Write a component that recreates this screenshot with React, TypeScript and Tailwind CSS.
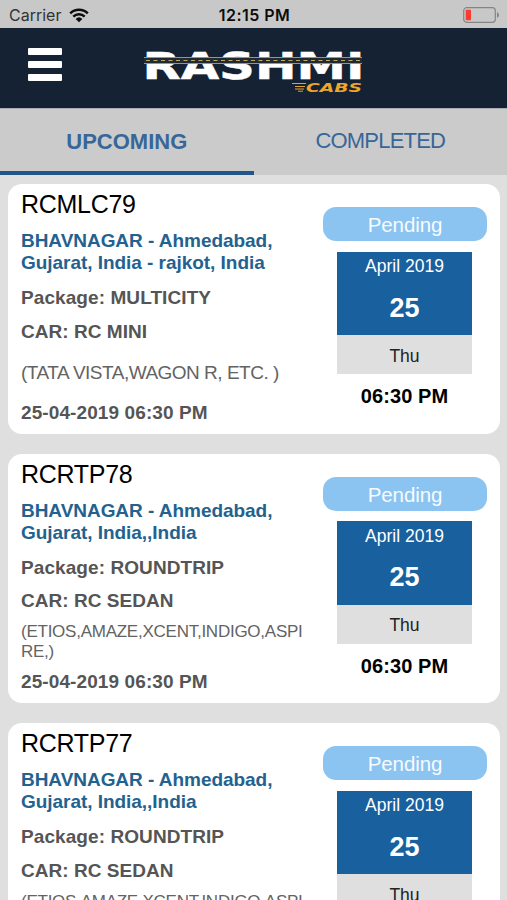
import { clsx } from 'clsx';

/* ─── Data ─────────────────────────────────────────────────── */

interface Booking {
  id: string;
  route: [string, string];
  tripType: string;
  car: string;
  models: string[];
  date: string;
  month: string;
  day: string;
  weekday: string;
  time: string;
  status: string;
}

const schedule = {
  date: '25-04-2019',
  month: 'April 2019',
  day: '25',
  weekday: 'Thu',
  time: '06:30 PM',
  status: 'Pending',
};

const bookings: Booking[] = [
  {
    id: 'RCMLC79',
    route: ['BHAVNAGAR - Ahmedabad,', 'Gujarat, India - rajkot, India'],
    tripType: 'MULTICITY',
    car: 'RC MINI',
    models: ['(TATA VISTA,WAGON R, ETC. )'],
    ...schedule,
  },
  {
    id: 'RCRTP78',
    route: ['BHAVNAGAR - Ahmedabad,', 'Gujarat, India,,India'],
    tripType: 'ROUNDTRIP',
    car: 'RC SEDAN',
    models: ['(ETIOS,AMAZE,XCENT,INDIGO,ASPI', 'RE,)'],
    ...schedule,
  },
  {
    id: 'RCRTP77',
    route: ['BHAVNAGAR - Ahmedabad,', 'Gujarat, India,,India'],
    tripType: 'ROUNDTRIP',
    car: 'RC SEDAN',
    models: ['(ETIOS,AMAZE,XCENT,INDIGO,ASPI', 'RE,)'],
    ...schedule,
  },
];

/* ─── Header ───────────────────────────────────────────────── */

function WifiIcon() {
  return (
    <svg width="20" height="15" viewBox="0 0 20 15" fill="none" stroke="#0c0c0c" strokeWidth="2.5">
      <path d="M1.2 5.3a12.6 12.6 0 0 1 17.6 0" />
      <path d="M4.3 8.6a8.2 8.2 0 0 1 11.4 0" />
      <path d="M10 14.2 6.7 10.9a4.8 4.8 0 0 1 6.6 0z" fill="#0c0c0c" stroke="none" />
    </svg>
  );
}

function BatteryIcon() {
  return (
    <svg width="37" height="16" viewBox="0 0 37 16">
      <rect x="0.7" y="0.7" width="31.6" height="14.6" rx="3" fill="none" stroke="#858585" strokeWidth="1.2" />
      <rect x="2.7" y="2.8" width="5.3" height="10.4" rx="0.8" fill="#fb3b30" />
      <path d="M34 5.2c1.5.5 2 1.6 2 2.8s-.5 2.3-2 2.8z" fill="#858585" />
    </svg>
  );
}

function StatusBar() {
  return (
    <div className="grid h-7 grid-cols-3 items-center bg-[#c8c8c8] pt-0.5 pr-[7px] pl-[9px] font-['Inter',sans-serif] text-[16px]">
      <div className="flex items-center gap-2 text-[#333]">
        <span>Carrier</span>
        <WifiIcon />
      </div>
      <span className="text-center font-semibold tracking-[0.45px] text-[#0c0c0c]">12:15 PM</span>
      <div className="flex justify-end">
        <BatteryIcon />
      </div>
    </div>
  );
}

function Logo() {
  return (
    <svg
      className="overflow-visible"
      width="220"
      height="44"
      viewBox="0 0 220 44"
      fontFamily="'DejaVu Sans', sans-serif"
      fontWeight="700"
    >
      <text
        x="-1.6"
        y="30"
        fontSize="37.5"
        fill="#fff"
        stroke="#fff"
        strokeWidth="0.5"
        textLength="222"
        lengthAdjust="spacingAndGlyphs"
      >
        RASHMI
      </text>
      {/* road running through the word */}
      <rect x="0" y="8" width="218" height="7" fill="#1f2a35" />
      <path d="M0 8.5h218M0 14.5h218" stroke="#b8953a" strokeWidth="1.2" />
      <path d="M2 11.5h216" stroke="#c3a95c" strokeWidth="1" strokeDasharray="4 3.5" />
      {/* speed lines */}
      <path d="M148 34.5h14M151 37.5h10M151 40h9M154 42.200h5" stroke="#e5a02e" strokeWidth="1" />
      <text
        x="162"
        y="42.5"
        fontSize="12.5"
        fontStyle="italic"
        fill="#eda62b"
        textLength="56"
        lengthAdjust="spacingAndGlyphs"
      >
        CABS
      </text>
    </svg>
  );
}

function Header() {
  return (
    <header className="flex h-20 items-start bg-[#152233] pl-7">
      <button className="mt-5 flex w-[34px] flex-col gap-[6px]" aria-label="Menu">
        <span className="h-[7px] rounded-[1px] bg-white" />
        <span className="h-[7px] rounded-[1px] bg-white" />
        <span className="h-[7px] rounded-[1px] bg-white" />
      </button>
      <div className="mt-[21px] ml-[82px]">
        <Logo />
      </div>
    </header>
  );
}

function Tab({ label, active = false }: { label: string; active?: boolean }) {
  return (
    <button
      className={clsx(
        'flex flex-1 items-center justify-center border-b-4 text-[22px] text-[#386698]',
        active ? 'border-[#235688] pt-[3px] font-bold' : 'border-transparent tracking-[-0.8px]'
      )}
    >
      {label}
    </button>
  );
}

/* ─── Booking card ─────────────────────────────────────────── */

function BookingCard({ booking }: { booking: Booking }) {
  const wrapped = booking.models.length > 1;

  return (
    <article className="flex h-[249.5px] shrink-0 justify-between rounded-[14px] bg-white pr-[13px] pl-[13px]">
      <div className="pt-1.5 text-[19px] font-bold whitespace-nowrap text-[#555]">
        <h2 className="text-[25px] leading-7 font-normal tracking-[-0.3px] text-black">{booking.id}</h2>
        <div className="mt-[12px] leading-[22px] tracking-[-0.04px] text-[#23628f]">
          {booking.route.map((line) => (
            <p key={line}>{line}</p>
          ))}
        </div>
        <p className="mt-[12px] leading-6 tracking-[0.08px]">Package: {booking.tripType}</p>
        <p className="mt-[9.5px] leading-6 tracking-[0.04px]">CAR: {booking.car}</p>
        <div
          className={clsx(
            'mt-[7px] flex h-[44px] flex-col justify-center font-normal text-[#636363]',
            wrapped ? 'text-[17px] leading-5 tracking-[-0.25px]' : 'text-[19px] leading-6 tracking-[-0.5px]'
          )}
        >
          {booking.models.map((line) => (
            <p key={line}>{line}</p>
          ))}
        </div>
        <p className="mt-[6px] leading-6 tracking-[0.1px]">
          {booking.date} {booking.time}
        </p>
      </div>

      <div className="flex w-[164px] flex-col items-center pt-[23px]">
        <span className="flex h-[34px] w-full items-center justify-center rounded-[13px] bg-[#8bc4f1] pt-[3px] text-[20.5px] tracking-[-0.1px] text-[#f7fbff]">
          {booking.status}
        </span>
        <div className="mt-[10.5px] mr-px flex h-[83.5px] w-[135px] flex-col items-center bg-[#19609f] text-white">
          <span className="mt-[2.5px] text-[17.5px] leading-6">{booking.month}</span>
          <span className="mt-[13.5px] text-[27px] leading-8 font-bold">{booking.day}</span>
        </div>
        <div className="mr-px flex h-[39px] w-[135px] items-center justify-center bg-[#dfdfdf] pt-[3px] text-[17.5px] text-[#222]">
          {booking.weekday}
        </div>
        <span className="mt-[10px] mr-px text-[20px] leading-6 font-bold tracking-[0.1px] text-black">
          {booking.time}
        </span>
      </div>
    </article>
  );
}

export default function App() {
  return (
    <div className="flex h-screen flex-col overflow-hidden bg-[#dfdfdf] font-['Liberation_Sans',Arial,sans-serif]">
      <StatusBar />
      <Header />
      <nav className="flex h-[67px] shrink-0 border-t border-[#a9adb2] bg-[#cbcbcb]">
        <Tab label="UPCOMING" active />
        <Tab label="COMPLETED" />
      </nav>
      <main className="flex min-h-0 flex-1 flex-col gap-5 overflow-hidden pt-[9px] pr-[7px] pl-2">
        {bookings.map((booking) => (
          <BookingCard key={booking.id} booking={booking} />
        ))}
      </main>
    </div>
  );
}
